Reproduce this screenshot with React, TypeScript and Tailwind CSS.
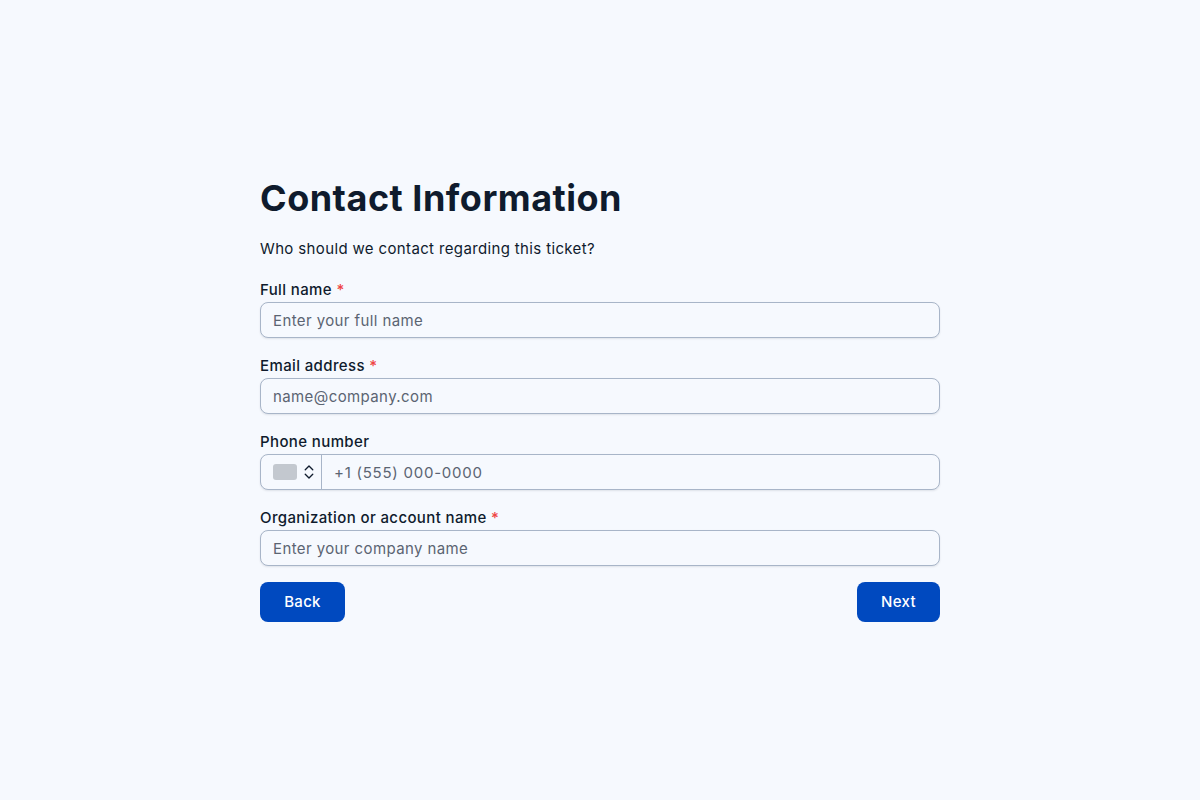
import { ChevronsUpDown } from "lucide-react";

const font = { fontFamily: "Inter, sans-serif" };

function Field({ label, required, placeholder }: { label: string; required?: boolean; placeholder: string }) {
  return (
    <div className="flex flex-col">
      <label className="h-6 text-[15px] leading-6 font-medium tracking-[0.38px] text-[#0f1b2d]">
        {label}
        {required && <span className="text-[#ef4444]"> *</span>}
      </label>
      <div className="flex h-9 items-center rounded-lg border border-[#a8b5c8] bg-[#f6f9fe] px-3 pt-[2px] text-[15px] tracking-[0.4px] text-[#5b6472] shadow-[0_1px_2px_rgba(15,27,45,0.1)]">
        {placeholder}
      </div>
    </div>
  );
}

export default function App() {
  return (
    <main className="flex min-h-screen items-center justify-center bg-[#f6f9fe]" style={font}>
      <div className="flex w-[680px] flex-col pb-[2px]">
        <h1 className="h-11 text-[36px] leading-[44px] font-bold tracking-[0.5px] text-[#0f1b2d]">Contact Information</h1>
        <p className="mt-4 mb-[18px] h-6 text-[15px] leading-[26px] tracking-[0.36px] text-[#0f1b2d]">Who should we contact regarding this ticket?</p>

        <div className="flex flex-col gap-4">
          <Field label="Full name" required placeholder="Enter your full name" />
          <Field label="Email address" required placeholder="name@company.com" />

          <div className="flex flex-col">
            <label className="h-6 text-[15px] leading-6 font-medium tracking-[0.38px] text-[#0f1b2d]">Phone number</label>
            <div className="flex h-9 items-center rounded-lg border border-[#a8b5c8] bg-[#f6f9fe] text-[15px] text-[#5b6472] shadow-[0_1px_2px_rgba(15,27,45,0.1)]">
              <div className="flex h-full w-[61px] items-center gap-[3px] border-r border-[#a8b5c8] pl-3">
                <span className="h-4 w-6 rounded-[3px] bg-[#c3c8cf]" />
                <ChevronsUpDown size={18} strokeWidth={1.8} className="text-[#0f1b2d]" />
              </div>
              <span className="pt-[2px] pl-3 tracking-[0.75px]">+1 (555) 000-0000</span>
            </div>
          </div>

          <Field label="Organization or account name" required placeholder="Enter your company name" />

          <div className="flex justify-between">
            <button className="h-10 w-[85px] rounded-lg bg-[#0049bf] text-[15px] font-medium tracking-[0.3px] text-white">Back</button>
            <button className="h-10 w-[83px] rounded-lg bg-[#0049bf] text-[15px] font-medium tracking-[0.3px] text-white">Next</button>
          </div>
        </div>
      </div>
    </main>
  );
}
